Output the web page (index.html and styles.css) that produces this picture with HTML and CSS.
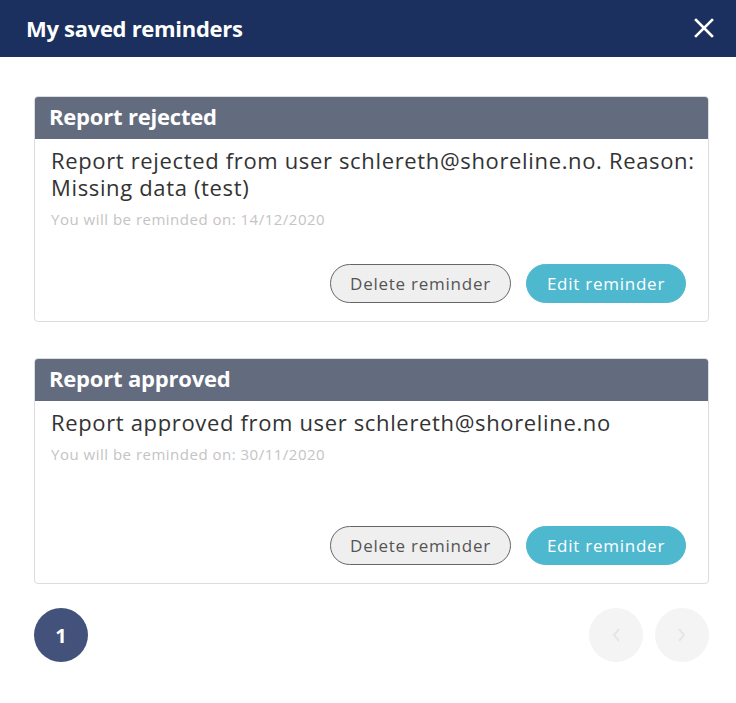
FILE: index.html
```html
<!DOCTYPE html>
<html>
<head>
<meta charset="utf-8">
<link rel="stylesheet" href="styles.css">
</head>
<body>
<div class="modal">
  <div class="modal-header">
    <h1 class="modal-title">My saved reminders</h1>
    <button class="close-btn" aria-label="Close">
      <svg width="20" height="20" viewBox="0 0 20 20"><path d="M2 2 L18 18 M18 2 L2 18" stroke="#fff" stroke-width="2.6" stroke-linecap="square"/></svg>
    </button>
  </div>
  <div class="modal-body">
    <div class="card">
      <div class="card-header">Report rejected</div>
      <div class="card-body">
        <p class="card-text">Report rejected from user schlereth@shoreline.no. Reason: Missing data (test)</p>
        <p class="card-date">You will be reminded on: 14/12/2020</p>
        <div class="card-actions">
          <button class="btn btn-outline">Delete reminder</button>
          <button class="btn btn-primary">Edit reminder</button>
        </div>
      </div>
    </div>
    <div class="card">
      <div class="card-header">Report approved</div>
      <div class="card-body">
        <p class="card-text">Report approved from user schlereth@shoreline.no</p>
        <p class="card-date">You will be reminded on: 30/11/2020</p>
        <div class="card-actions">
          <button class="btn btn-outline">Delete reminder</button>
          <button class="btn btn-primary">Edit reminder</button>
        </div>
      </div>
    </div>
    <div class="pagination">
      <span class="page current">1</span>
      <div class="page-nav">
        <span class="page nav"><svg width="12" height="16" viewBox="0 0 12 16"><path d="M9 2 L4 8 L9 14" fill="none" stroke="#e6e6e6" stroke-width="2"/></svg></span>
        <span class="page nav"><svg width="12" height="16" viewBox="0 0 12 16"><path d="M3 2 L8 8 L3 14" fill="none" stroke="#e6e6e6" stroke-width="2"/></svg></span>
      </div>
    </div>
  </div>
</div>
</body>
</html>
```
FILE: styles.css
```css
* { box-sizing: border-box; }
html, body { margin: 0; padding: 0; background: #fff; }
body { font-family: "Open Sans", "Noto Sans", sans-serif; color: #333; }
.modal { width: 736px; height: 703px; background: #fff; }
.modal-header {
  height: 57px;
  background: #1b305e;
  display: flex;
  align-items: center;
  justify-content: space-between;
  padding: 0 22px 2px 26px;
}
.modal-title {
  margin: 0;
  color: #fff;
  font-size: 22px;
  font-weight: 700;
  letter-spacing: -0.3px;
}
.close-btn {
  background: none; border: 0; padding: 0; width: 20px; height: 20px;
  display: flex; cursor: pointer;
}
.modal-body { padding: 39px 27px 0 34px; }
.card {
  border: 1px solid #dcdcdc;
  border-radius: 4px;
  margin-bottom: 36px;
  overflow: hidden;
}
.card-header {
  background: #636b7e;
  color: #fff;
  height: 42px;
  display: flex;
  align-items: center;
  padding: 0 14px 4px;
  font-size: 22px;
  font-weight: 700;
  letter-spacing: -0.2px;
}
.card-body {
  min-height: 182px;
  display: flex;
  flex-direction: column;
  padding: 8px 0 18px 16px;
}
.card-text { margin: 0; font-size: 22px; line-height: 27px; letter-spacing: 0.65px; color: #333; }
.card-date { margin: 8px 0 0; font-size: 15px; line-height: 20px; letter-spacing: 0.5px; color: #c4c4c4; }
.card-actions { margin-top: auto; margin-right: 22px; display: flex; justify-content: flex-end; gap: 15px; }
.btn {
  height: 39px;
  border-radius: 20px;
  font-family: inherit;
  font-size: 17px;
  letter-spacing: 0.75px;
  padding: 0;
  cursor: pointer;
}
.btn-outline { background: #efefef; border: 1px solid #666; color: #555; width: 181px; }
.btn-primary { background: #4eb8cf; border: 1px solid #4eb8cf; color: #fff; width: 160px; font-weight: 500; }
.pagination { display: flex; justify-content: space-between; align-items: center; margin-top: -12px; }
.page {
  width: 54px; height: 54px; border-radius: 50%;
  display: flex; align-items: center; justify-content: center;
}
.page.current { background: #43527a; color: #fff; font-size: 20px; font-weight: 700; }
.page-nav { display: flex; gap: 12px; }
.page.nav { background: #f4f4f4; }
```
